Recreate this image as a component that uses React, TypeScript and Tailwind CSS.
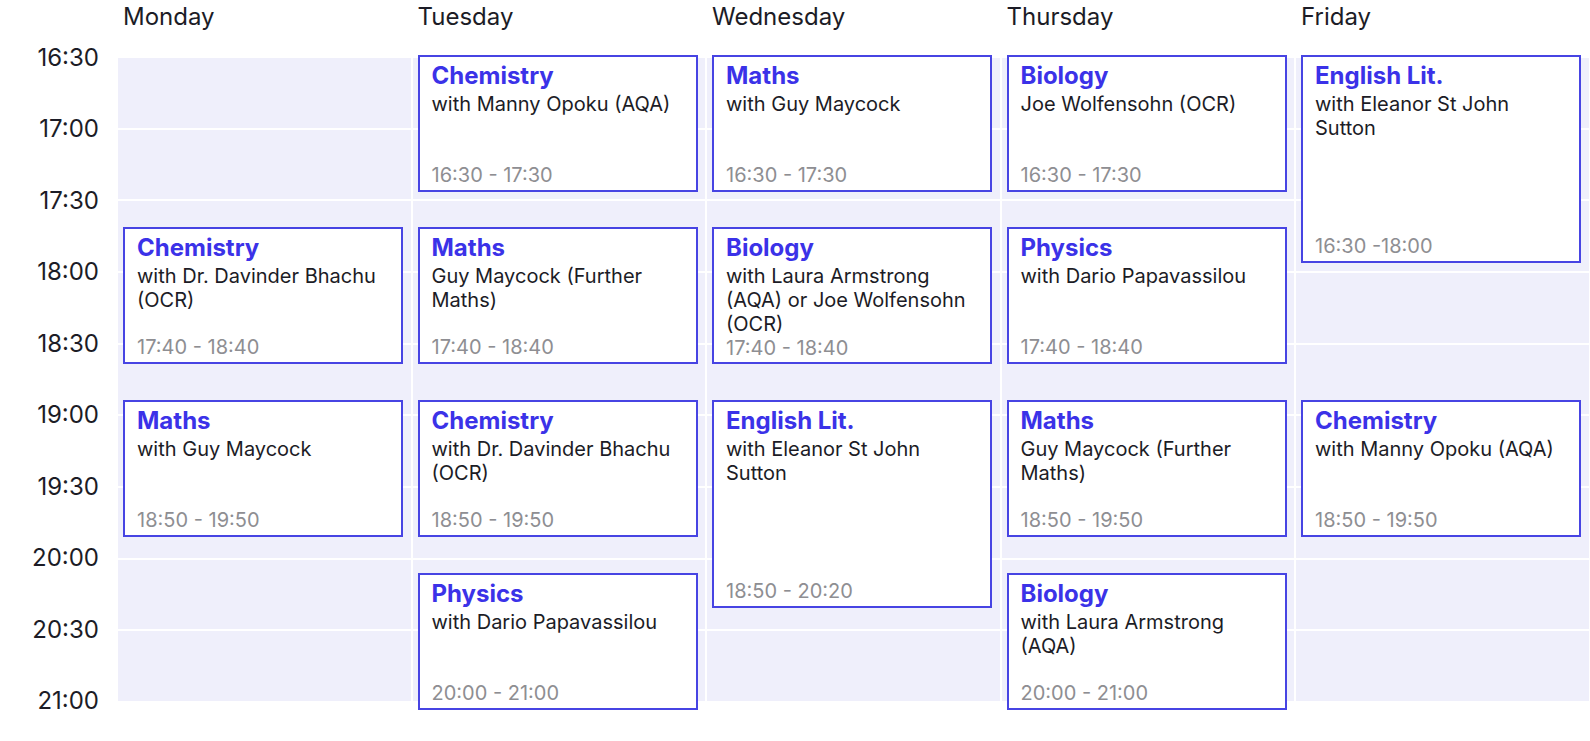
import React from 'react';

type Lesson = {
  subject: string;
  teacher: string;
  start: string;
  end: string;
  label?: string;
};

const days: { name: string; lessons: Lesson[] }[] = [
  {
    name: 'Monday',
    lessons: [
      { subject: 'Chemistry', teacher: 'with Dr. Davinder Bhachu\n(OCR)', start: '17:40', end: '18:40' },
      { subject: 'Maths', teacher: 'with Guy Maycock', start: '18:50', end: '19:50' },
    ],
  },
  {
    name: 'Tuesday',
    lessons: [
      { subject: 'Chemistry', teacher: 'with Manny Opoku (AQA)', start: '16:30', end: '17:30' },
      { subject: 'Maths', teacher: 'Guy Maycock (Further\nMaths)', start: '17:40', end: '18:40' },
      { subject: 'Chemistry', teacher: 'with Dr. Davinder Bhachu\n(OCR)', start: '18:50', end: '19:50' },
      { subject: 'Physics', teacher: 'with Dario Papavassilou', start: '20:00', end: '21:00' },
    ],
  },
  {
    name: 'Wednesday',
    lessons: [
      { subject: 'Maths', teacher: 'with Guy Maycock', start: '16:30', end: '17:30' },
      { subject: 'Biology', teacher: 'with Laura Armstrong\n(AQA) or Joe Wolfensohn\n(OCR)', start: '17:40', end: '18:40' },
      { subject: 'English Lit.', teacher: 'with Eleanor St John\nSutton', start: '18:50', end: '20:20' },
    ],
  },
  {
    name: 'Thursday',
    lessons: [
      { subject: 'Biology', teacher: 'Joe Wolfensohn (OCR)', start: '16:30', end: '17:30' },
      { subject: 'Physics', teacher: 'with Dario Papavassilou', start: '17:40', end: '18:40' },
      { subject: 'Maths', teacher: 'Guy Maycock (Further\nMaths)', start: '18:50', end: '19:50' },
      { subject: 'Biology', teacher: 'with Laura Armstrong\n(AQA)', start: '20:00', end: '21:00' },
    ],
  },
  {
    name: 'Friday',
    lessons: [
      { subject: 'English Lit.', teacher: 'with Eleanor St John\nSutton', start: '16:30', end: '18:00', label: '16:30 -18:00' },
      { subject: 'Chemistry', teacher: 'with Manny Opoku (AQA)', start: '18:50', end: '19:50' },
    ],
  },
];

const times = ['16:30', '17:00', '17:30', '18:00', '18:30', '19:00', '19:30', '20:00', '20:30', '21:00'];

const toMin = (t: string) => {
  const [h, m] = t.split(':').map(Number);
  return h * 60 + m;
};

const LessonCard = ({ lesson }: { lesson: Lesson }) => {
  const startMin = toMin(lesson.start) - toMin('16:30');
  const dur = toMin(lesson.end) - toMin(lesson.start);
  return (
    <div
      className="absolute left-[5px] w-[280px] border-2 border-[#4744e3] bg-white px-[12px] pt-[5px] pb-[3px] flex flex-col"
      style={{ top: startMin * 2.467 - 3.3, height: dur * 2.367 - 5 }}
    >
      <div className="text-[24px] leading-[28px] font-bold text-[#3b32e8]">{lesson.subject}</div>
      <div className="mt-[2px] text-[20px] leading-[24px] text-[#1c1c26] whitespace-pre-line">{lesson.teacher}</div>
      <div className="mt-auto text-[20px] leading-[24px] text-[#8e8e92]">
        {lesson.label ?? `${lesson.start} - ${lesson.end}`}
      </div>
    </div>
  );
};

export default function App() {
  return (
    <div className="w-[1590px] h-[741px] bg-white overflow-hidden font-['Inter',sans-serif] text-[#1c1c26]">
      <div className="flex h-[58px]">
        <div className="w-[118px] shrink-0" />
        <div className="flex gap-[2px]">
          {days.map((d) => (
            <div key={d.name} className="w-[292.5px] shrink-0 pl-[5px] pt-[3px] text-[24px] leading-[28px]">
              {d.name}
            </div>
          ))}
        </div>
      </div>
      <div className="flex">
        <div className="w-[118px] shrink-0 h-[643px] flex flex-col justify-between pr-[19px]">
          {times.map((t) => (
            <div key={t} className="h-0 flex items-center justify-end">
              <span className="text-[24px] leading-[28px]">{t}</span>
            </div>
          ))}
        </div>
        <div className="flex gap-[2px]">
          {days.map((d) => (
            <div key={d.name} className="relative w-[292.5px] shrink-0 h-[643px]">
              <div className="h-full flex flex-col gap-[2px]">
                {times.slice(1).map((t) => (
                  <div key={t} className="flex-1 bg-[#efeffb]" />
                ))}
              </div>
              {d.lessons.map((l) => (
                <LessonCard key={l.start} lesson={l} />
              ))}
            </div>
          ))}
        </div>
      </div>
    </div>
  );
}
